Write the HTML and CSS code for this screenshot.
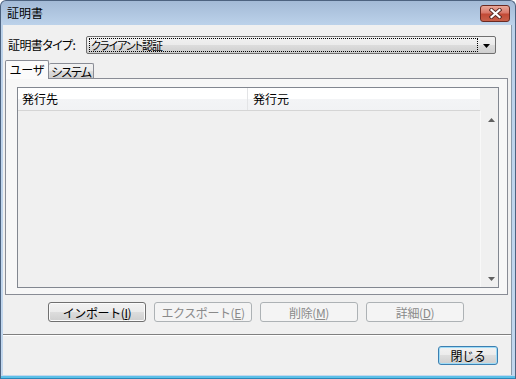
FILE: index.html
```html
<!DOCTYPE html>
<html>
	<head>
		<meta charset="utf-8">
		<title>証明書</title>

		<link rel="stylesheet" href="styles.css">
	</head>

	<body>
		<div id="window">
			<div class="titleBar">
				<span class="titleText">証明書</span>
				<div class="closeButton">
					<svg width="13" height="11" viewBox="0 0 13 11">
						<path d="M2.5 2 L10.5 9 M10.5 2 L2.5 9" stroke="#5a2a24" stroke-width="4" stroke-linecap="square"/>
						<path d="M2.5 2 L10.5 9 M10.5 2 L2.5 9" stroke="#ffffff" stroke-width="2.2" stroke-linecap="square"/>
					</svg>
				</div>
			</div>

			<div class="client">
				<div class="typeRow">
					<span class="typeLabel">証明書タイプ:</span>
					<div class="combo">
						<span class="comboText">クライアント認証</span>
						<span class="comboArrow">
							<svg width="7" height="4" viewBox="0 0 7 4"><polygon points="0,0 7,0 3.5,4" fill="#000000"/></svg>
						</span>
					</div>
				</div>

				<div class="tabStrip">
					<div class="tab tabActive">ユーザ</div>
					<div class="tab">システム</div>
				</div>

				<div class="tabPanel">
					<div class="listView">
						<div class="listHeader">
							<div class="headerCell headerFirst">発行先</div>
							<div class="headerCell">発行元</div>
						</div>
						<div class="headerGap"></div>
						<div class="listBody"></div>
						<div class="scrollBar">
							<span class="scrollArrow">
								<svg width="7" height="4" viewBox="0 0 7 4"><polygon points="3.5,0 7,4 0,4" fill="#606060"/></svg>
							</span>
							<span class="scrollArrow">
								<svg width="7" height="4" viewBox="0 0 7 4"><polygon points="0,0 7,0 3.5,4" fill="#606060"/></svg>
							</span>
						</div>
					</div>
				</div>

				<div class="actionRow">
					<button class="button">インポート(<u>I</u>)</button>
					<button class="button" disabled>エクスポート(<u>E</u>)</button>
					<button class="button" disabled>削除(<u>M</u>)</button>
					<button class="button" disabled>詳細(<u>D</u>)</button>
				</div>

				<div class="separator"></div>

				<div class="footerRow">
					<button class="button defaultButton">閉じる</button>
				</div>
			</div>
		</div>
	</body>
</html>
```

FILE: styles.css
```css
			*
			{
				box-sizing: border-box;
			}

			body
			{
				margin: 0;
				font-size: 12px;
				font-family: "Noto Sans CJK JP", "Liberation Sans", sans-serif;
				font-feature-settings: "palt";
				color: #000000;
			}

			#window
			{
				width: 516px;
				height: 379px;
				display: flex;
				flex-direction: column;
				padding: 0 4px 3px 2px;
				border: 1px solid #4d6380;
				border-bottom-color: #2b86b8;
				border-radius: 6px 6px 0 0;
				background: linear-gradient(#a3bad6 0px, #bcd2ea 24px, #c2d7ee 100%);
				box-shadow: inset 0 -2px 0 #5cc0e8;
			}

			.titleBar
			{
				height: 24px;
				display: flex;
				align-items: flex-start;
				justify-content: space-between;
				padding: 0 1px 0 4px;
			}

			.titleText
			{
				font-size: 12px;
				line-height: 24px;
			}

			.closeButton
			{
				width: 30px;
				height: 17px;
				margin-top: 4px;
				display: flex;
				align-items: center;
				justify-content: center;
				border: 1px solid #6b2a22;
				border-radius: 3px;
				background: linear-gradient(#e9a99a 0%, #d9786a 45%, #c24a36 55%, #c8604a 100%);
			}

			.client
			{
				flex: 1;
				display: flex;
				flex-direction: column;
				background-color: #f0f0f0;
				box-shadow: 1px 0 0 #8a9aab;
			}

			.typeRow
			{
				display: flex;
				align-items: center;
				height: 18px;
				margin: 11px 15px 0 5px;
			}

			.typeLabel
			{
				width: 78px;
				line-height: 18px;
				letter-spacing: -0.6px;
			}

			.combo
			{
				flex: 1;
				height: 18px;
				display: flex;
				padding: 1px 1px 1px 2px;
				border: 1px solid #707070;
				border-radius: 2px;
				background: linear-gradient(#f2f2f2 0%, #ebebeb 50%, #dddddd 50%, #cfcfcf 100%);
			}

			.comboText
			{
				flex: 1;
				border: 1px dotted #000000;
				padding-left: 1px;
				font-size: 11px;
				line-height: 12px;
				letter-spacing: -1px;
			}

			.comboArrow
			{
				width: 16px;
				display: flex;
				align-items: center;
				justify-content: center;
				padding-top: 1px;
			}

			.tabStrip
			{
				display: flex;
				align-items: flex-end;
				height: 18px;
				margin: 6px 0 0 2px;
			}

			.tab
			{
				width: 45px;
				height: 15px;
				border: 1px solid #898c95;
				border-bottom: 0;
				border-left: 0;
				border-radius: 2px 2px 0 0;
				background: linear-gradient(#f2f2f2 0%, #ebebeb 50%, #dddddd 50%, #cfcfcf 100%);
				font-size: 12px;
				line-height: 15px;
				letter-spacing: -1px;
				text-align: center;
			}

			.tabActive
			{
				position: relative;
				z-index: 1;
				width: 44px;
				height: 19px;
				margin-bottom: -1px;
				border-left: 1px solid #898c95;
				background: #fbfbfb;
				line-height: 18px;
				letter-spacing: 0;
			}

			.tabPanel
			{
				height: 217px;
				margin: 0 3px 0 2px;
				padding: 8px 8px 6px 11px;
				border: 1px solid #898c95;
				background-color: #f7f7f7;
			}

			.listView
			{
				height: 201px;
				display: grid;
				grid-template-columns: 1fr 18px;
				grid-template-rows: 23px 1fr;
				border: 1px solid #828790;
				background-color: #f0f0f0;
			}

			.listHeader
			{
				display: flex;
				border-bottom: 1px solid #d5d5d5;
				background: linear-gradient(#ffffff 0%, #ffffff 50%, #f3f4f6 50%, #f1f2f4 100%);
			}

			.headerCell
			{
				padding-left: 5px;
				line-height: 22px;
			}

			.headerFirst
			{
				width: 230px;
				padding-left: 4px;
				border-right: 1px solid #e3e4e6;
			}

			.scrollBar
			{
				display: flex;
				flex-direction: column;
				justify-content: space-between;
				border-left: 1px solid #f8f8f8;
				padding-left: 3px;
			}

			.scrollArrow
			{
				height: 17px;
				display: flex;
				align-items: center;
				justify-content: center;
			}

			.actionRow
			{
				display: flex;
				justify-content: center;
				gap: 8px;
				margin-top: 7px;
				padding-right: 2px;
			}

			.button
			{
				width: 98px;
				height: 20px;
				padding: 0;
				border: 1px solid #707070;
				border-radius: 3px;
				background: linear-gradient(#f2f2f2 0%, #ebebeb 50%, #dddddd 50%, #cfcfcf 100%);
				box-shadow: inset 0 0 0 1px #fbfbfb;
				font-family: inherit;
				font-size: 12px;
				line-height: 17px;
				letter-spacing: -0.4px;
				color: #000000;
			}

			.button:disabled
			{
				border-color: #adb2b5;
				background: #f4f4f4;
				box-shadow: none;
				color: #8a8a8a;
			}

			.separator
			{
				height: 2px;
				margin-top: 12px;
				border-top: 1px solid #808080;
				border-bottom: 1px solid #ffffff;
			}

			.footerRow
			{
				display: flex;
				justify-content: flex-end;
				margin: 10px 13px 0 0;
			}

			.defaultButton
			{
				width: 60px;
				height: 19px;
				border-color: #3c7fb1;
				box-shadow: inset 0 0 0 1px #9fdcf7;
			}
```
